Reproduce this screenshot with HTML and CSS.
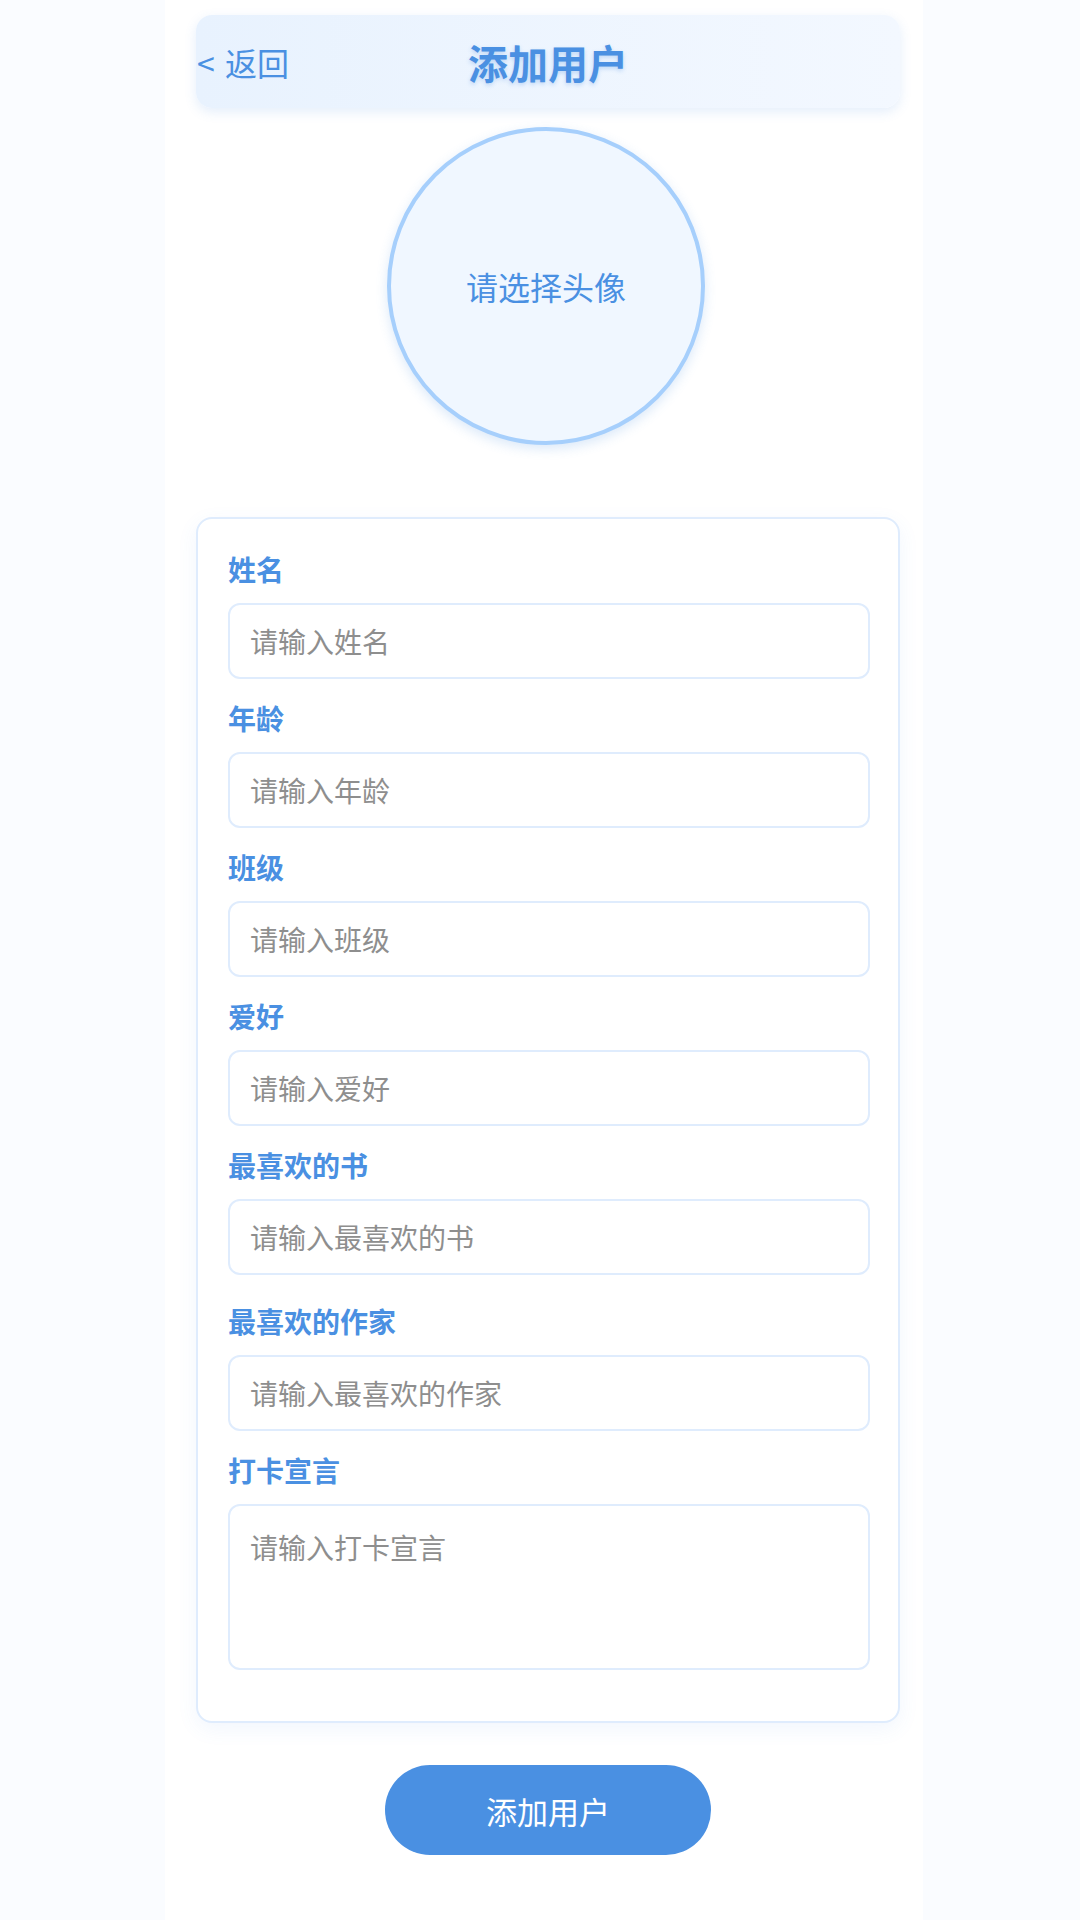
FILE: index.html
```html
<!DOCTYPE html>
<html>

<head>
    <meta charset="utf-8">
    <title>添加用户</title>
    <link rel="stylesheet" href="styles.css">
</head>

<body>
    <div class="page">
        <div class="header">
            <span class="back">&lt; 返回</span>
            <h1 class="title">添加用户</h1>
            <span></span>
        </div>

        <div class="avatar">请选择头像</div>

        <div class="card">
            <div class="field">
                <label>姓名</label>
                <input type="text" placeholder="请输入姓名">
            </div>
            <div class="field">
                <label>年龄</label>
                <input type="text" placeholder="请输入年龄">
            </div>
            <div class="field">
                <label>班级</label>
                <input type="text" placeholder="请输入班级">
            </div>
            <div class="field">
                <label>爱好</label>
                <input type="text" placeholder="请输入爱好">
            </div>
            <div class="field">
                <label>最喜欢的书</label>
                <input type="text" placeholder="请输入最喜欢的书">
            </div>
            <div class="field field-split">
                <label>最喜欢的作家</label>
                <input type="text" placeholder="请输入最喜欢的作家">
            </div>
            <div class="field">
                <label>打卡宣言</label>
                <textarea placeholder="请输入打卡宣言"></textarea>
            </div>
        </div>

        <button class="submit">添加用户</button>
    </div>
</body>

</html>
```

FILE: styles.css
```css
body {
    background-color: #fafcff;
    font-family: "Noto Sans CJK SC", "Noto Sans", sans-serif;
    margin: 0;
    padding: 0;
}

.page {
    width: 758px;
    min-height: 1920px;
    margin-left: 165px;
    padding: 15px 23px 0 31px;
    box-sizing: border-box;
    background-color: #fff;
    display: flex;
    flex-direction: column;
    align-items: center;
}

.header {
    width: 704px;
    height: 93px;
    display: grid;
    grid-template-columns: 1fr auto 1fr;
    align-items: center;
    border-radius: 16px;
    background: linear-gradient(to right, #e8f2fe, #f3f8ff);
    box-shadow: 0 4px 12px rgba(74, 144, 226, 0.15);
}

.back {
    color: #4a90e2;
    font-size: 32px;
    line-height: 40px;
    padding-left: 1px;
    word-spacing: 3px;
}

.title {
    margin: 0;
    color: #4a90e2;
    font-size: 40px;
    font-weight: bold;
    line-height: 48px;
    text-shadow: 0 2px 4px rgba(74, 144, 226, 0.3);
}

.avatar {
    width: 318px;
    height: 318px;
    margin-top: 19px;
    margin-right: 4px;
    box-sizing: border-box;
    border: 4px solid #a6cffc;
    border-radius: 50%;
    background-color: #f0f7ff;
    box-shadow: 0 4px 12px rgba(74, 144, 226, 0.2);
    display: flex;
    align-items: center;
    justify-content: center;
    color: #4a90e2;
    font-size: 32px;
}

.card {
    width: 704px;
    margin-top: 72px;
    box-sizing: border-box;
    padding: 32px 28px 30px 30px;
    border: 2px solid #dfecfd;
    border-radius: 16px;
    background-color: #fff;
    box-shadow: 0 6px 20px rgba(74, 144, 226, 0.08);
}

.field {
    margin-bottom: 21px;
}

.field-split {
    padding-top: 7px;
}

.field label {
    display: block;
    color: #4a90e2;
    font-size: 28px;
    font-weight: bold;
    line-height: 36px;
    margin-bottom: 16px;
}

.field input,
.field textarea {
    display: block;
    width: 100%;
    box-sizing: border-box;
    border: 2px solid #dfecfd;
    border-radius: 12px;
    background-color: #fff;
    font-family: inherit;
    font-size: 28px;
    color: #333;
    outline: none;
}

.field input {
    height: 76px;
    padding: 0 20px;
}

.field textarea {
    height: 166px;
    padding: 21px 20px;
    line-height: 40px;
    resize: none;
}

.field input::placeholder,
.field textarea::placeholder {
    color: #8e8e8e;
}

.submit {
    width: 326px;
    height: 90px;
    margin-top: 42px;
    border: none;
    border-radius: 45px;
    background-color: #4a90e2;
    color: #fff;
    font-family: inherit;
    font-size: 31px;
    cursor: pointer;
}
```
